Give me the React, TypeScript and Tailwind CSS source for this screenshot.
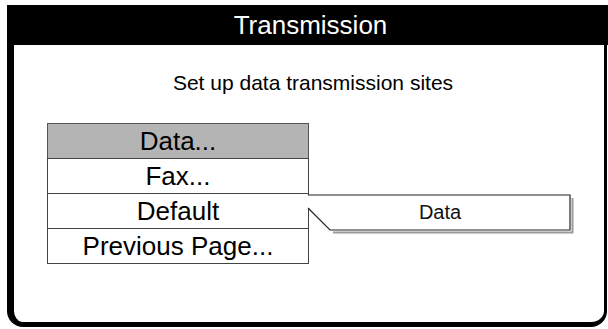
const ROWS = ["Data...", "Fax...", "Default", "Previous Page..."];

function Callout() {
  // pointer from the Default row out to the "Data" value box
  return (
    <svg
      className="absolute left-[307px] top-[194px]"
      width="270"
      height="42"
      viewBox="0 0 270 42"
    >
      <path
        d="M265.5 4 V38.5 H26"
        fill="none"
        stroke="#9a9a9a"
        strokeWidth="2"
      />
      <path d="M1 1 H263 V36 H23 L1 14 Z" fill="#fff" />
      <path
        d="M1 1 H263 V36 H23 L1 14"
        fill="none"
        stroke="#222"
        strokeWidth="1.2"
      />
      <text
        x="133"
        y="25"
        textAnchor="middle"
        fontFamily="'Liberation Sans', Arial, sans-serif"
        fontSize="20"
        fill="#111"
      >
        Data
      </text>
    </svg>
  );
}

export default function App() {
  return (
    <div className="w-[608px] h-[329px] bg-white relative pt-[5px] pl-[7px] font-['Liberation_Sans',Arial,sans-serif] text-black">
      <div className="w-[601px] h-[322px] flex flex-col">
        <div className="h-[40px] bg-black text-white text-[26px] leading-none flex items-center justify-center pl-[6px]">
          Transmission
        </div>
        <div className="flex-1 mr-[1px] border-l-[7px] border-r-[3px] border-b-[5px] border-black rounded-b-[16px]">
          <p className="pt-[26px] text-center text-[21px] leading-[24px] pl-[8px]">
            Set up data transmission sites
          </p>
          <div className="ml-[33px] mt-[28px] w-[262px] flex flex-col">
            {ROWS.map((r, i) => (
              <div
                key={r}
                className={
                  i === 0
                    ? "h-[36px] border border-[#555] bg-[#b4b4b4] text-[26px] leading-[34px] text-center"
                    : "h-[36px] -mt-px border border-[#444] bg-white text-[26px] leading-[34px] text-center"
                }
              >
                {r}
              </div>
            ))}
          </div>
        </div>
      </div>
      <Callout />
    </div>
  );
}
